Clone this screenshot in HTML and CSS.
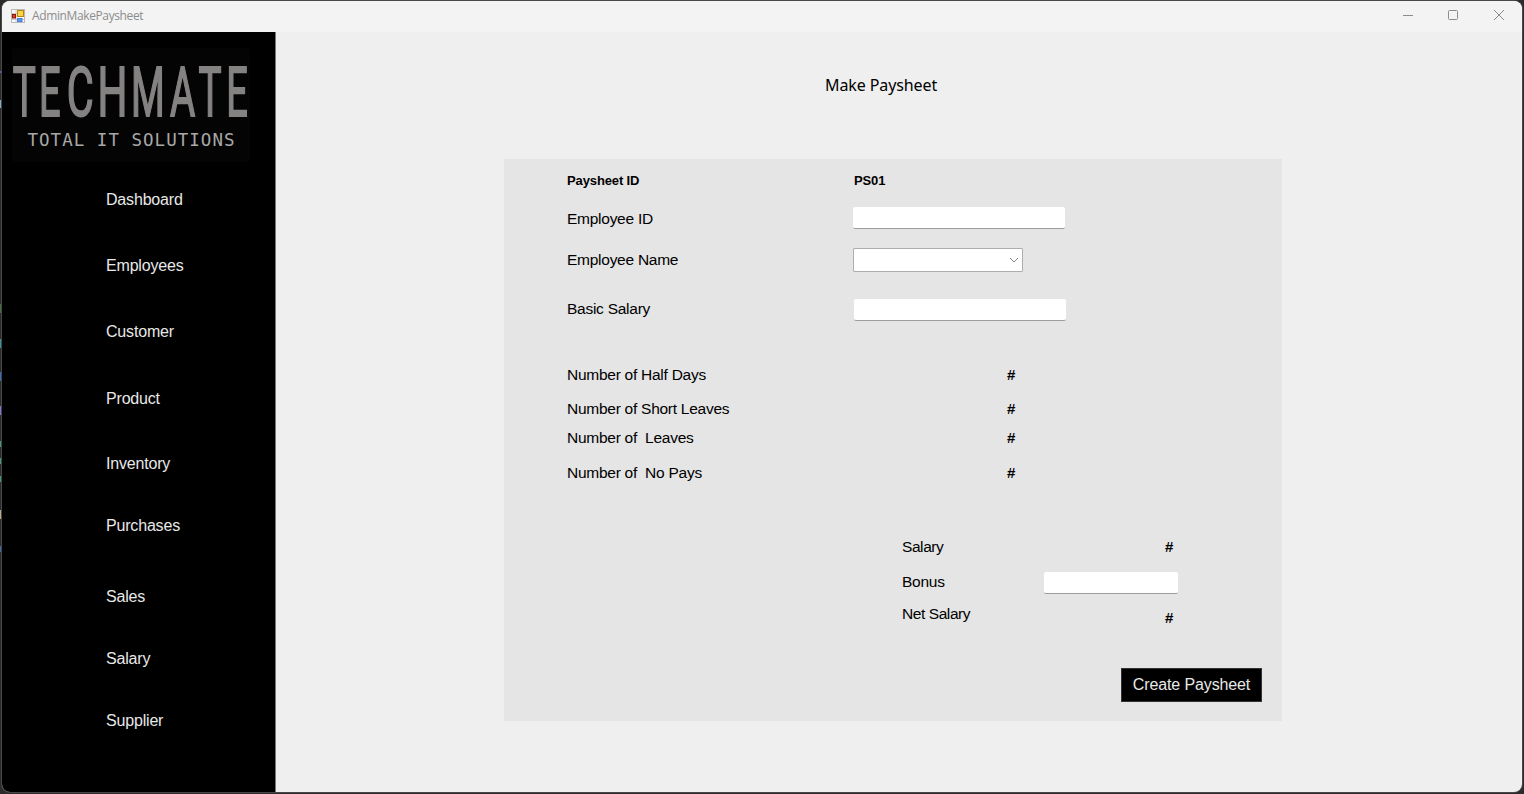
FILE: index.html
```html
<!DOCTYPE html>
<html lang="en">
<head>
<meta charset="utf-8">
<title>AdminMakePaysheet</title>
<link rel="stylesheet" href="styles.css">
</head>
<body>
<div class="window">
  <header class="titlebar">
    <svg class="app-icon" width="14" height="14" viewBox="0 0 14 14">
      <rect x=".5" y=".5" width="13" height="13" fill="#fafafa" stroke="#b9b9b9"/>
      <path d="M5 1v12M1 4.500h5M1 10.500h12" stroke="#c8c8c8"/>
      <rect x="6.500" y="1.500" width="6" height="6" fill="#fbd24a" stroke="#b48808"/>
      <rect x="1.500" y="5.500" width="3" height="3.500" fill="#e2402c" stroke="#8f1408"/>
      <rect x="6.500" y="9.500" width="4.500" height="3" fill="#5b97f5" stroke="#4a7cd8"/>
    </svg>
    <span class="caption">AdminMakePaysheet</span>
    <svg class="controls" width="104" height="14" viewBox="0 0 104 14" fill="none" stroke="#8c8c8c">
      <path d="M1 6.500h10"/>
      <rect x="46.500" y="1.500" width="9" height="9" rx="1"/>
      <path d="M92 1l10 10M102 1L92 11"/>
    </svg>
  </header>
  <div class="body">
    <aside class="sidebar">
      <svg class="logo" width="238" height="114" viewBox="0 0 238 114">
        <rect width="238" height="114" rx="4" fill="#040404"/>
        <g class="brand">
          <text transform="translate(.8 68) scale(.56 1)">T</text>
          <text transform="translate(27 68) scale(.55 1)">E</text>
          <text transform="translate(54.800 68) scale(.6 1)">C</text>
          <text transform="translate(85.500 68) scale(.61 1)">H</text>
          <text transform="translate(119 68) scale(.56 1)">M</text>
          <text transform="translate(158 68) scale(.56 1)">A</text>
          <text transform="translate(186.500 68) scale(.56 1)">T</text>
          <text transform="translate(214.200 68) scale(.55 1)">E</text>
        </g>
        <text class="tagline" x="15.500" y="98" textLength="207">TOTAL IT SOLUTIONS</text>
      </svg>
      <nav class="menu">
        <a class="dashboard">Dashboard</a>
        <a class="employees">Employees</a>
        <a class="customer">Customer</a>
        <a class="product">Product</a>
        <a class="inventory">Inventory</a>
        <a class="purchases">Purchases</a>
        <a class="sales">Sales</a>
        <a class="salary">Salary</a>
        <a class="supplier">Supplier</a>
      </nav>
    </aside>
    <main class="content">
      <h1>Make Paysheet</h1>
      <section class="panel">
        <div class="row id-row"><span>Paysheet ID</span><span>PS01</span></div>
        <div class="row employee-id"><span>Employee ID</span><input type="text"></div>
        <div class="row employee-name"><span>Employee Name</span>
          <div class="combo"><svg width="10" height="6" viewBox="0 0 10 6" fill="none" stroke="#858585"><path d="M1 1l4 4 4-4"/></svg></div>
        </div>
        <div class="row basic"><span>Basic Salary</span><input type="text"></div>
        <div class="row half"><span>Number of Half Days</span><b>#</b></div>
        <div class="row short"><span>Number of Short Leaves</span><b>#</b></div>
        <div class="row leaves"><span>Number of&nbsp; Leaves</span><b>#</b></div>
        <div class="row nopays"><span>Number of&nbsp; No Pays</span><b>#</b></div>
        <div class="row total gross"><span>Salary</span><b>#</b></div>
        <div class="row total bonus"><span>Bonus</span><input type="text"></div>
        <div class="row total net"><span>Net Salary</span><b>#</b></div>
        <button type="button">Create Paysheet</button>
      </section>
    </main>
  </div>
</div>
</body>
</html>
```
FILE: styles.css
```css
* { box-sizing: border-box; }

body {
  margin: 0;
  height: 794px;
  padding: 1px 2px 2px;
  overflow: hidden;
  background:
    linear-gradient(#6c5ad0, #6c5ad0) 0 71px / 2px 2px no-repeat,
    linear-gradient(#7fb0c0, #7fb0c0) 0 100px / 2px 8px no-repeat,
    linear-gradient(#47703a, #47703a) 0 304px / 2px 9px no-repeat,
    linear-gradient(#2a9a9c, #2a9a9c) 0 339px / 2px 9px no-repeat,
    linear-gradient(#2f70c8, #2f70c8) 0 372px / 2px 9px no-repeat,
    linear-gradient(#8a70d8, #8a70d8) 0 406px / 2px 9px no-repeat,
    linear-gradient(#38a080, #38a080) 0 441px / 2px 6px no-repeat,
    linear-gradient(#38a080, #38a080) 0 458px / 2px 6px no-repeat,
    linear-gradient(#38a080, #38a080) 0 476px / 2px 6px no-repeat,
    linear-gradient(#c0a888, #c0a888) 0 510px / 2px 9px no-repeat,
    linear-gradient(#3a6aa8, #3a6aa8) 0 546px / 2px 6px no-repeat,
    #2b2b2b;
  font-family: "Liberation Sans", Arial, sans-serif;
  font-size: 16px;
  color: #000;
}

.window {
  height: 791px;
  width: 1520px;
  border-radius: 8px;
  overflow: hidden;
  background: #efefef;
  box-shadow: 0 0 0 1px #484848;
}

.titlebar {
  height: 31px;
  padding: 0 16px 2px 9px;
  display: flex;
  align-items: center;
  background: #f3f3f3;
}

.caption {
  margin-left: 7px;
  font: 12px "Open Sans", "Noto Sans", sans-serif;
  letter-spacing: -.38px;
  color: #8c8c8c;
}

.controls { margin-left: auto; }

.body { display: flex; height: 760px; }

.sidebar {
  width: 274px;
  padding: 16px 0 0 10px;
  background: #000;
  border-right: 1px solid #777;
}

.logo { display: block; }

.brand {
  font: 69px Roboto, sans-serif;
  fill: #858282;
  stroke: #858282;
  stroke-width: 1.5px;
}

.brand text { vector-effect: non-scaling-stroke; }

.tagline {
  font: 17.5px "DejaVu Sans Mono", monospace;
  fill: #a8a8a8;
}

.menu {
  display: flex;
  flex-direction: column;
  padding-left: 94px;
  color: #e8e8e8;
}

.menu a { height: 20px; line-height: 20px; letter-spacing: -.18px; }
.dashboard { margin-top: 28px; }
.employees { margin-top: 46px; }
.customer { margin-top: 46px; }
.product { margin-top: 47px; }
.inventory { margin-top: 45px; }
.purchases { margin-top: 42px; }
.sales { margin-top: 51px; }
.salary { margin-top: 42px; }
.supplier { margin-top: 42px; }

.content { flex: 1; }

h1 {
  margin: 41px 0 0 549px;
  height: 24px;
  font: 16px/24px "Noto Sans", sans-serif;
  letter-spacing: -.1px;
}

.panel {
  width: 778px;
  height: 562px;
  margin: 62px 0 0 228px;
  padding: 10px 20px 19px 63px;
  background: #e5e5e5;
  display: flex;
  flex-direction: column;
}

.row {
  height: 24px;
  display: grid;
  grid-template-columns: 286px 1fr;
  grid-template-rows: 24px;
  align-items: center;
  line-height: 24px;
  font-size: 15.5px;
  letter-spacing: -.26px;
}

.row b { font-size: 15px; padding-left: 154px; }
.id-row { font-size: 13px; font-weight: 700; letter-spacing: -.12px; }
.id-row span + span { padding-left: 1px; }
.employee-id { margin-top: 13px; }
.employee-name { margin-top: 17px; }
.employee-id span, .employee-name span, .bonus span { padding-top: 2px; }
.basic { margin-top: 26px; }
.half { margin-top: 42px; }
.short { margin-top: 10px; }
.leaves { margin-top: 5px; }
.nopays { margin-top: 11px; }
.gross { margin-top: 50px; }
.bonus { margin-top: 10px; }
.net { margin-top: 9px; }

input {
  width: 212px;
  height: 22px;
  padding: 0 4px;
  border: 0;
  border-bottom: 1px solid #9c9c9c;
  border-radius: 2px;
  background: #fff;
}

.basic input { margin: 2px 0 0 1px; }
.basic span { margin-top: -1px; }

.combo {
  width: 170px;
  height: 24px;
  margin-top: 1px;
  padding-right: 3px;
  display: flex;
  align-items: center;
  justify-content: flex-end;
  background: #fff;
  border: 1px solid #adadad;
  border-radius: 1px;
}

.total { margin-left: 335px; grid-template-columns: 142px 1fr; }
.total b { padding-left: 121px; }
.net { align-items: start; }
.net b { padding-top: 4px; }
.net span, .gross span { letter-spacing: -.42px; }
.bonus input { width: 134px; margin-top: 3px; }

button {
  width: 141px;
  height: 34px;
  margin: auto 0 0 auto;
  padding: 0;
  border: 1px solid #333;
  background: #000;
  color: #e8e8e8;
  font: 16px "Liberation Sans", Arial, sans-serif;
  letter-spacing: -.12px;
}
```
